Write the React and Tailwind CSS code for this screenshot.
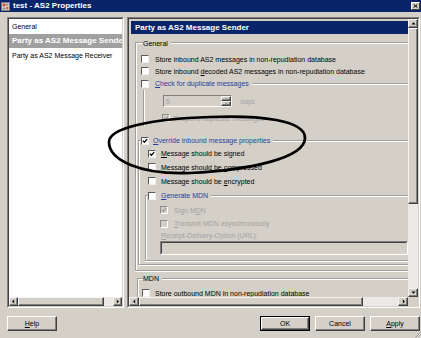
import React from "react";

const Chk = ({ on, dis }) => (
  <span
    className={
      dis
        ? "relative block shrink-0 w-[8px] h-[8px] border border-t-[#8c8c8c] border-l-[#8c8c8c] border-r-white border-b-white bg-[#d4d0c8]"
        : "relative block shrink-0 w-[8px] h-[8px] border border-t-[#5a5a5a] border-l-[#5a5a5a] border-r-[#f0f0f0] border-b-[#f0f0f0] bg-white"
    }
  >
    {on && (
      <svg viewBox="0 0 6 6" className="absolute inset-0 w-[6px] h-[6px]">
        <path d="M0.8 2.6 L2.4 4.2 L5.2 1.1" fill="none" stroke={dis ? "#9a9a9a" : "#000"} strokeWidth="1.3" />
      </svg>
    )}
  </span>
);

const Line = () => (
  <div className="flex-1 h-[2px] border-t border-t-[#a09e98] border-b border-b-white" />
);

const Tri = ({ d }) => {
  const pts = {
    up: "0.5,3.5 4.5,3.5 2.5,1.3",
    down: "0.5,1.5 4.5,1.5 2.5,3.7",
    left: "3.2,0.5 3.2,4.5 1,2.5",
    right: "1.8,0.5 1.8,4.5 4,2.5",
  }[d];
  return (
    <svg width="5" height="5" viewBox="0 0 5 5">
      <polygon points={pts} fill="#000" />
    </svg>
  );
};

const Raised = ({ cls, children }) => (
  <div
    className={`${cls} flex items-center justify-center bg-[#d4d0c8] border border-t-[#f4f4f4] border-l-[#f4f4f4] border-r-[#404040] border-b-[#404040] shadow-[inset_-1px_-1px_0_#808080]`}
  >
    {children}
  </div>
);

const Btn = ({ children, def, cls }) => (
  <div className={`${cls} h-[15px] ${def ? "border border-black" : ""}`}>
    <div className="h-full flex items-center justify-center bg-[#d4d0c8] border border-t-white border-l-white border-r-[#404040] border-b-[#404040] shadow-[inset_-1px_-1px_0_#808080]">
      {children}
    </div>
  </div>
);

const BLUE = "text-[#25439a]";
const DIS = "text-[#a2a2a2]";

export default function App() {
  return (
    <div className="relative w-[421px] h-[338px] overflow-hidden bg-[#d4d0c8] text-[7px] leading-none text-black font-['Liberation_Sans',Arial,sans-serif]">
      {/* title bar */}
      <div className="flex items-center h-[12px] bg-[#0a246a] pl-[1px] pr-[1px]">
        <svg width="9" height="9" viewBox="0 0 9 9" className="shrink-0">
          <rect x="0" y="0" width="9" height="9" fill="#ececec" />
          <rect x="0.5" y="0.5" width="8" height="8" fill="none" stroke="#7a7a7a" />
          <rect x="1.5" y="1.5" width="3" height="3" fill="#c84a2a" />
          <rect x="5" y="1.5" width="2.5" height="2" fill="#8a8a8a" />
          <rect x="1.5" y="5.5" width="3" height="2" fill="#8a8a8a" />
          <rect x="5" y="4.5" width="2.5" height="3" fill="#d06a3a" />
        </svg>
        <span className="ml-[3px] text-white font-bold text-[8px]">test - AS2 Properties</span>
        <div className="ml-auto w-[9px] h-[8px] flex items-center justify-center bg-[#d4d0c8] border border-t-white border-l-white border-r-[#404040] border-b-[#404040]">
          <svg width="5" height="4" viewBox="0 0 5 4">
            <path d="M0.5 0.3 L4.5 3.7 M4.5 0.3 L0.5 3.7" stroke="#000" strokeWidth="1" />
          </svg>
        </div>
      </div>

      {/* main area */}
      <div className="flex pl-[7px] pt-[5px]">
        {/* left panel */}
        <div className="w-[117px] h-[291px] border border-t-[#808080] border-l-[#808080] border-r-white border-b-white">
          <div className="h-full flex flex-col border border-t-[#404040] border-l-[#404040] border-r-[#d4d0c8] border-b-[#d4d0c8]">
            <div className="flex-1 bg-white overflow-hidden">
              <div className="h-[15px] flex items-center pl-[3px]">General</div>
              <div className="h-[14px] flex items-center pl-[3px] bg-[#a0a0a0] text-white font-bold text-[8px] whitespace-nowrap overflow-hidden">
                Party as AS2 Message Sender
              </div>
              <div className="h-[14px] flex items-center pl-[3px]">Party as AS2 Message Receiver</div>
            </div>
            <div className="h-[9px] flex">
              <Raised cls="w-[9px] h-full">
                <Tri d="left" />
              </Raised>
              <Raised cls="w-[86px] h-full" />
              <div className="flex-1 bg-[#ebe9e5]" />
              <Raised cls="w-[9px] h-full">
                <Tri d="right" />
              </Raised>
            </div>
          </div>
        </div>

        {/* right panel */}
        <div className="ml-[3px] w-[293px] h-[291px] border border-t-[#808080] border-l-[#808080] border-r-white border-b-white">
          <div className="h-full flex flex-col border border-t-[#404040] border-l-[#404040] border-r-[#d4d0c8] border-b-[#d4d0c8]">
            <div className="flex h-[278px]">
              {/* content */}
              <div className="w-[279px] h-full overflow-hidden flex flex-col">
                <div className="mt-[2px] ml-[2px] h-[13px] shrink-0 flex items-center pl-[4px] bg-[#0a246a] text-white font-bold text-[8px]">
                  Party as AS2 Message Sender
                </div>

                {/* General group */}
                <div className="ml-[6px] mt-[4px] shrink-0">
                  <div className="flex items-center h-[10px]">
                    <div className="self-end w-[8px] h-[6px] border-t border-l border-[#a09e98] shadow-[inset_1px_1px_0_#fff]" />
                    <span>General</span>
                    <div className="ml-[3px] flex-1 flex">
                      <Line />
                    </div>
                  </div>
                  <div className="border-l border-b border-[#a09e98] shadow-[inset_1px_0_0_#fff,0_1px_0_#fff] pl-[5px] pt-[5px] pb-[5px]">
                    <div className="flex items-center h-[12px] whitespace-nowrap">
                      <Chk />
                      <span className="ml-[6px]">Store inbound AS2 messages in non-repudiation database</span>
                    </div>
                    <div className="flex items-center h-[12px] whitespace-nowrap">
                      <Chk />
                      <span className="ml-[6px]">
                        Store inbound <u>d</u>ecoded AS2 messages in non-repudiation database
                      </span>
                    </div>

                    {/* duplicate group */}
                    <div>
                      <div className="flex items-center h-[13px] whitespace-nowrap">
                        <Chk />
                        <span className={`ml-[6px] ${BLUE}`}>
                          <u>C</u>heck for duplicate messages
                        </span>
                        <div className="ml-[3px] flex-1 flex">
                          <Line />
                        </div>
                      </div>
                      <div className="ml-[2px] border-l border-[#a09e98] shadow-[inset_1px_0_0_#fff] pt-[5px] pb-[2px]">
                        <div className="flex items-center h-[12px] pl-[19px]">
                          <div className="w-[69px] h-full flex border border-t-[#808080] border-l-[#808080] border-r-white border-b-white bg-[#d4d0c8]">
                            <div className={`flex-1 flex items-center pl-[2px] ${DIS}`}>5</div>
                            <div className="w-[10px] flex flex-col">
                              <Raised cls="w-full flex-1">
                                <svg width="5" height="3" viewBox="0 0 5 3">
                                  <polygon points="0.5,2.6 4.5,2.6 2.5,0.4" fill="#a0a0a0" />
                                </svg>
                              </Raised>
                              <Raised cls="w-full flex-1">
                                <svg width="5" height="3" viewBox="0 0 5 3">
                                  <polygon points="0.5,0.4 4.5,0.4 2.5,2.6" fill="#a0a0a0" />
                                </svg>
                              </Raised>
                            </div>
                          </div>
                          <span className={`ml-[8px] ${DIS}`}>days</span>
                        </div>
                        <div className="flex items-center h-[12px] mt-[5px] pl-[18px] whitespace-nowrap">
                          <Chk on dis />
                          <span className={`ml-[3px] ${DIS}`}>Suspend duplicate messages</span>
                        </div>
                      </div>
                    </div>

                    {/* override group */}
                    <div className="-ml-[3px] mt-[8px]">
                      <div className="flex items-center h-[13px] whitespace-nowrap">
                        <div className="self-end w-[3px] h-[7px] border-t border-l border-[#a09e98] shadow-[inset_1px_1px_0_#fff]" />
                        <Chk on />
                        <span className={`ml-[4px] ${BLUE}`}>
                          <u>O</u>verride inbound message properties
                        </span>
                        <div className="ml-[3px] flex-1 flex">
                          <Line />
                        </div>
                      </div>
                      <div className="border-l border-b border-[#a09e98] shadow-[inset_1px_0_0_#fff,0_1px_0_#fff] pl-[9px] pb-[3px]">
                        <div className="flex items-center h-[13px] whitespace-nowrap">
                          <Chk on />
                          <span className="ml-[5px]">
                            <u>M</u>essage should be signed
                          </span>
                        </div>
                        <div className="flex items-center h-[14px] whitespace-nowrap">
                          <Chk />
                          <span className="ml-[5px]">
                            Message should be <u>c</u>ompressed
                          </span>
                        </div>
                        <div className="flex items-center h-[14px] whitespace-nowrap">
                          <Chk />
                          <span className="ml-[5px]">
                            Message should be <u>e</u>ncrypted
                          </span>
                        </div>

                        {/* generate MDN group */}
                        <div className="-ml-[3px]">
                          <div className="flex items-center h-[15px] whitespace-nowrap">
                            <div className="self-end w-[3px] h-[8px] border-t border-l border-[#a09e98] shadow-[inset_1px_1px_0_#fff]" />
                            <Chk />
                            <span className={`ml-[5px] ${BLUE}`}>
                              <u>G</u>enerate MDN
                            </span>
                            <div className="ml-[3px] flex-1 flex">
                              <Line />
                            </div>
                          </div>
                          <div className="border-l border-b border-[#a09e98] shadow-[inset_1px_0_0_#fff,0_1px_0_#fff] pl-[14px] pb-[5px]">
                            <div className="flex items-center h-[14px] whitespace-nowrap">
                              <Chk on dis />
                              <span className={`ml-[6px] ${DIS}`}>
                                Sign M<u>D</u>N
                              </span>
                            </div>
                            <div className="flex items-center h-[13px] whitespace-nowrap">
                              <Chk dis />
                              <span className={`ml-[6px] ${DIS}`}>
                                <u>T</u>ransmit MDN asynchronously
                              </span>
                            </div>
                            <div className={`flex items-center h-[11px] pl-[1px] whitespace-nowrap ${DIS}`}>
                              <span>
                                <u>R</u>eceipt-Delivery-Option (URL):
                              </span>
                            </div>
                            <div className="h-[14px] border border-t-[#808080] border-l-[#808080] border-r-white border-b-white">
                              <div className="h-full border border-t-[#404040] border-l-[#404040] border-r-[#d4d0c8] border-b-[#d4d0c8] bg-[#d4d0c8]" />
                            </div>
                          </div>
                        </div>
                      </div>
                    </div>
                  </div>
                </div>

                {/* MDN group */}
                <div className="ml-[8px] mt-[2px] shrink-0">
                  <div className="flex items-center h-[11px]">
                    <div className="self-end w-[6px] h-[6px] border-t border-l border-[#a09e98] shadow-[inset_1px_1px_0_#fff]" />
                    <span>MDN</span>
                    <div className="ml-[3px] flex-1 flex">
                      <Line />
                    </div>
                  </div>
                  <div className="border-l border-[#a09e98] shadow-[inset_1px_0_0_#fff] pl-[4px] pt-[3px] pb-[6px]">
                    <div className="flex items-center h-[12px] whitespace-nowrap">
                      <Chk />
                      <span className="ml-[5px]">
                        Store outbound MD<u>N</u> in non-repudiation database
                      </span>
                    </div>
                  </div>
                </div>
              </div>

              {/* vertical scrollbar */}
              <div className="w-[10px] h-full flex flex-col">
                <Raised cls="w-full h-[9px]">
                  <Tri d="up" />
                </Raised>
                <Raised cls="w-full h-[176px]" />
                <div className="flex-1 bg-[#ebe9e5]" />
                <Raised cls="w-full h-[9px]">
                  <Tri d="down" />
                </Raised>
              </div>
            </div>

            {/* horizontal scrollbar */}
            <div className="flex h-[9px]">
              <Raised cls="w-[10px] h-full">
                <Tri d="left" />
              </Raised>
              <Raised cls="w-[224px] h-full" />
              <div className="w-[35px] bg-[#ebe9e5]" />
              <Raised cls="w-[10px] h-full">
                <Tri d="right" />
              </Raised>
              <div className="flex-1 bg-[#d4d0c8]" />
            </div>
          </div>
        </div>
      </div>

      {/* buttons */}
      <div className="flex pt-[8px] pl-[7px] pr-[1px]">
        <Btn cls="w-[50px]">
          <span>
            <u>H</u>elp
          </span>
        </Btn>
        <Btn def cls="w-[50px] ml-auto">
          <span>OK</span>
        </Btn>
        <Btn cls="w-[50px] ml-[5px]">
          <span>Cancel</span>
        </Btn>
        <Btn cls="w-[50px] ml-[5px]">
          <span>
            <u>A</u>pply
          </span>
        </Btn>
      </div>

      {/* resize grip */}
      <svg className="absolute right-0 bottom-0" width="7" height="7" viewBox="0 0 7 7">
        <path d="M6.5 1.5 L1.5 6.5 M6.5 4 L4 6.5" stroke="#808080" strokeWidth="1" />
        <path d="M6.5 2.5 L2.5 6.5 M6.5 5 L5 6.5" stroke="#fff" strokeWidth="0.8" />
      </svg>

      {/* hand-drawn ellipse annotation */}
      <svg className="absolute inset-0 pointer-events-none" width="421" height="338" viewBox="0 0 421 338">
        <path
          d="M109,142 C109,128 150,119 210,117 C260,115 305,120 305,138 C305,158 250,170 190,173 C140,175 109,160 109,142 Z"
          fill="none"
          stroke="#000"
          strokeWidth="2.7"
        />
      </svg>
    </div>
  );
}
